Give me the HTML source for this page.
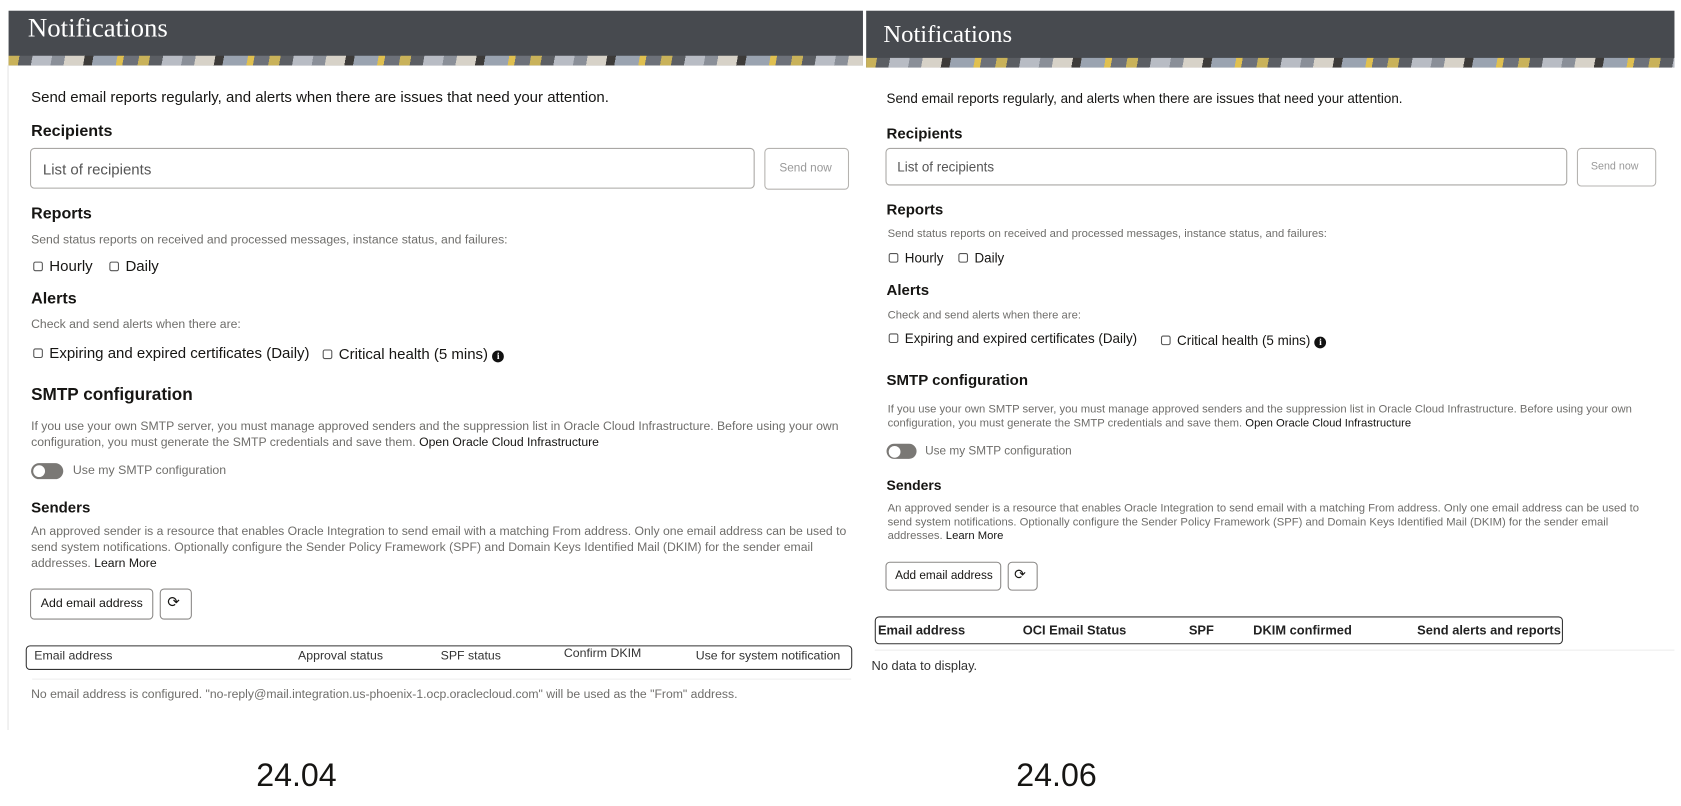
<!DOCTYPE html>
<html><head><meta charset="utf-8"><style>
*{margin:0;padding:0;box-sizing:border-box}
body{width:1681px;height:806px;background:#fff;position:relative;overflow:hidden;font-family:"Liberation Sans",sans-serif;color:#161513}
#w{position:absolute;left:0;top:0;width:1568px;height:752px;transform:scale(1.072);transform-origin:0 0}
.a{position:absolute;white-space:nowrap}
.hdr{position:absolute;background:#474a4f}
.stripe{position:absolute;height:9px;background:repeating-linear-gradient(100deg,#c9b25a 0 10px,#5b5e63 10px 22px,#b8bcc4 22px 40px,#8a8f98 40px 52px,#d7d2c8 52px 70px,#3d3b39 70px 78px,#9aa3b0 78px 100px,#e0c050 100px 106px,#6d7179 106px 120px)}
.h{font-weight:bold;font-size:15px}
.g{color:#6f6e6b}
.cb{display:inline-block;width:9px;height:9px;border:1px solid #555;border-radius:2px;margin-right:6px;vertical-align:0}
.btn{position:absolute;border:1px solid #b5b3b0;border-radius:4px;background:#fff}
.tog{position:absolute;width:30px;height:15px;border-radius:8px;background:#7a7875}
.tog:after{content:"";position:absolute;left:2px;top:2px;width:11px;height:11px;border-radius:6px;background:#fff}
.info{display:inline-block;width:11px;height:11px;border-radius:6px;background:#111;color:#fff;font-size:9px;font-weight:bold;text-align:center;line-height:11px;margin-left:4px;font-family:"Liberation Serif",serif}
</style></head><body><div id="w">
<!-- LEFT -->
<div class="hdr" style="left:8px;top:10px;width:797px;height:51px"></div>
<div class="stripe" style="left:8px;top:52px;width:797px"></div>
<div class="a" style="left:26px;top:13px;color:#fff;font-family:'Liberation Serif',serif;font-size:25px">Notifications</div>
<div style="position:absolute;left:7px;top:61px;width:1px;height:620px;background:#e4e4e4"></div>
<div class="a" style="left:29px;top:82px;font-size:14px">Send email reports regularly, and alerts when there are issues that need your attention.</div>
<div class="a h" style="left:29px;top:114px">Recipients</div>
<div class="btn" style="left:28px;top:138px;width:676px;height:38px;border-color:#a9a7a4"></div>
<div class="a g" style="left:40px;top:150px;font-size:14px;color:#555">List of recipients</div>
<div class="btn" style="left:713px;top:138px;width:79px;height:39px"></div>
<div class="a" style="left:727px;top:151px;font-size:11px;color:#999">Send now</div>
<div class="a h" style="left:29px;top:191px">Reports</div>
<div class="a g" style="left:29px;top:218px;font-size:11.4px">Send status reports on received and processed messages, instance status, and failures:</div>
<div class="a" style="left:31px;top:240px;font-size:14px"><span class="cb"></span>Hourly&nbsp;&nbsp;&nbsp;&nbsp;<span class="cb"></span>Daily</div>
<div class="a h" style="left:29px;top:270px">Alerts</div>
<div class="a g" style="left:29px;top:297px;font-size:11.4px">Check and send alerts when there are:</div>
<div class="a" style="left:31px;top:321px;font-size:14px"><span class="cb"></span>Expiring and expired certificates (Daily)</div>
<div class="a" style="left:301px;top:322px;font-size:14px"><span class="cb"></span>Critical health (5 mins)<span class="info">i</span></div>
<div class="a h" style="left:29px;top:360px;font-size:16px">SMTP configuration</div>
<div class="a g" style="left:29px;top:391px;font-size:11.4px;line-height:15px">If you use your own SMTP server, you must manage approved senders and the suppression list in Oracle Cloud Infrastructure. Before using your own<br>configuration, you must generate the SMTP credentials and save them. <span style="color:#161513">Open Oracle Cloud Infrastructure</span></div>
<div class="tog" style="left:29px;top:432px"></div>
<div class="a g" style="left:68px;top:433px;font-size:11.5px">Use my SMTP configuration</div>
<div class="a h" style="left:29px;top:465px;font-size:14px">Senders</div>
<div class="a g" style="left:29px;top:489px;font-size:11.4px;line-height:15px">An approved sender is a resource that enables Oracle Integration to send email with a matching From address. Only one email address can be used to<br>send system notifications. Optionally configure the Sender Policy Framework (SPF) and Domain Keys Identified Mail (DKIM) for the sender email<br>addresses. <span style="color:#161513">Learn More</span></div>
<div class="btn" style="left:28px;top:549px;width:115px;height:29px;border-color:#8a8886"></div>
<div class="a" style="left:38px;top:557px;font-size:11.5px">Add email address</div>
<div class="btn" style="left:149px;top:549px;width:30px;height:29px;border-color:#8a8886"></div>
<div class="a" style="left:156px;top:553px;font-size:14px">⟳</div>
<div style="position:absolute;left:24px;top:602px;width:771px;height:23px;border:1px solid #333;border-radius:4px"></div>
<div class="a" style="left:32px;top:606px;font-size:11.5px;color:#333">Email address</div>
<div class="a" style="left:278px;top:606px;font-size:11.5px;color:#333">Approval status</div>
<div class="a" style="left:411px;top:606px;font-size:11.5px;color:#333">SPF status</div>
<div class="a" style="left:526px;top:604px;font-size:11.5px;color:#333">Confirm DKIM</div>
<div class="a" style="left:649px;top:606px;font-size:11.5px;color:#333">Use for system notification</div>
<div style="position:absolute;left:30px;top:633px;width:764px;height:1px;background:#eee"></div>
<div class="a g" style="left:29px;top:642px;font-size:11.4px">No email address is configured. "no-reply@mail.integration.us-phoenix-1.ocp.oraclecloud.com" will be used as the "From" address.</div>
<div class="a" style="left:239px;top:707px;font-size:30px">24.04</div>

<!-- RIGHT -->
<div class="hdr" style="left:808px;top:10px;width:754px;height:53px"></div>
<div class="stripe" style="left:808px;top:54px;width:754px"></div>
<div class="a" style="left:824px;top:19px;color:#fff;font-family:'Liberation Serif',serif;font-size:23px">Notifications</div>
<div class="a" style="left:827px;top:85px;font-size:12.5px">Send email reports regularly, and alerts when there are issues that need your attention.</div>
<div class="a h" style="left:827px;top:116px;font-size:14px">Recipients</div>
<div class="btn" style="left:826px;top:138px;width:636px;height:35px;border-color:#a9a7a4"></div>
<div class="a" style="left:837px;top:149px;font-size:12.5px;color:#555">List of recipients</div>
<div class="btn" style="left:1471px;top:138px;width:74px;height:36px"></div>
<div class="a" style="left:1484px;top:150px;font-size:10px;color:#999">Send now</div>
<div class="a h" style="left:827px;top:187px;font-size:14px">Reports</div>
<div class="a g" style="left:828px;top:212px;font-size:10.5px">Send status reports on received and processed messages, instance status, and failures:</div>
<div class="a" style="left:829px;top:234px;font-size:12.5px"><span class="cb"></span>Hourly&nbsp;&nbsp;&nbsp;&nbsp;<span class="cb"></span>Daily</div>
<div class="a h" style="left:827px;top:262px;font-size:14px">Alerts</div>
<div class="a g" style="left:828px;top:288px;font-size:10.5px">Check and send alerts when there are:</div>
<div class="a" style="left:829px;top:309px;font-size:12.5px"><span class="cb"></span>Expiring and expired certificates (Daily)</div>
<div class="a" style="left:1083px;top:311px;font-size:12.5px"><span class="cb"></span>Critical health (5 mins)<span class="info">i</span></div>
<div class="a h" style="left:827px;top:346px;font-size:14px">SMTP configuration</div>
<div class="a g" style="left:828px;top:376px;font-size:10.5px;line-height:13px">If you use your own SMTP server, you must manage approved senders and the suppression list in Oracle Cloud Infrastructure. Before using your own<br>configuration, you must generate the SMTP credentials and save them. <span style="color:#161513">Open Oracle Cloud Infrastructure</span></div>
<div class="tog" style="left:827px;top:414px;width:28px;height:14px"></div>
<div class="a g" style="left:863px;top:415px;font-size:11px">Use my SMTP configuration</div>
<div class="a h" style="left:827px;top:445px;font-size:13px">Senders</div>
<div class="a g" style="left:828px;top:468px;font-size:10.5px;line-height:13px">An approved sender is a resource that enables Oracle Integration to send email with a matching From address. Only one email address can be used to<br>send system notifications. Optionally configure the Sender Policy Framework (SPF) and Domain Keys Identified Mail (DKIM) for the sender email<br>addresses. <span style="color:#161513">Learn More</span></div>
<div class="btn" style="left:826px;top:524px;width:108px;height:27px;border-color:#8a8886"></div>
<div class="a" style="left:835px;top:531px;font-size:11px">Add email address</div>
<div class="btn" style="left:940px;top:524px;width:28px;height:27px;border-color:#8a8886"></div>
<div class="a" style="left:946px;top:528px;font-size:13px">⟳</div>
<div style="position:absolute;left:816px;top:575px;width:642px;height:26px;border:1px solid #333;border-radius:4px"></div>
<div class="a" style="left:819px;top:581px;font-size:12px;font-weight:bold;color:#222">Email address</div>
<div class="a" style="left:954px;top:581px;font-size:12px;font-weight:bold;color:#222">OCI Email Status</div>
<div class="a" style="left:1109px;top:581px;font-size:12px;font-weight:bold;color:#222">SPF</div>
<div class="a" style="left:1169px;top:581px;font-size:12px;font-weight:bold;color:#222">DKIM confirmed</div>
<div class="a" style="left:1322px;top:581px;font-size:12px;font-weight:bold;color:#222">Send alerts and reports</div>
<div style="position:absolute;left:816px;top:606px;width:746px;height:1px;background:#eee"></div>
<div class="a" style="left:813px;top:614px;font-size:12px;color:#333">No data to display.</div>
<div class="a" style="left:948px;top:707px;font-size:30px">24.06</div>
</div></body></html>
